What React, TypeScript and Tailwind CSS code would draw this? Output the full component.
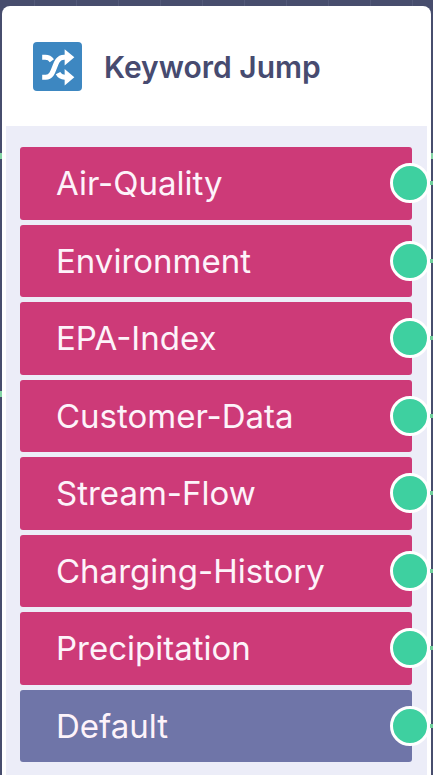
import React from "react";

type Branch = { label: string; fallback?: boolean };

const branches: Branch[] = [
  { label: "Air-Quality" },
  { label: "Environment" },
  { label: "EPA-Index" },
  { label: "Customer-Data" },
  { label: "Stream-Flow" },
  { label: "Charging-History" },
  { label: "Precipitation" },
  { label: "Default", fallback: true },
];

function ShuffleIcon() {
  return (
    <svg
      viewBox="0 0 48 48"
      className="size-[49px] shrink-0 rounded bg-[#3d87c1]"
      fill="none"
      aria-hidden="true"
    >
      <path
        d="M9 15h3c3 0 5 1.200 6.500 3.300M9 34.500h3.500c10.500 0 6.500-19.500 18-19.500h3M24.500 30.500c1.500 2.800 3.500 4 6.500 4h2.500"
        stroke="#fff"
        strokeWidth="5"
      />
      <path d="M31 7l9.500 8-9.500 8zM31 26.500l9.500 8-9.500 8z" fill="#fff" />
    </svg>
  );
}

function BranchRow({ label, fallback }: Branch) {
  return (
    <li
      className={`flex items-center justify-between rounded-[3px] pl-9 text-[#fdf3fa] ${
        fallback ? "bg-[#6f75a8]" : "bg-[#cd3a78]"
      }`}
    >
      <span className="text-[33px] leading-10">{label}</span>
      <span className="-mr-[21px] flex items-center">
        <span className="size-10 rounded-full border-3 border-white bg-[#3ed0a0]" />
        <span className="h-1 w-[3px] bg-[#6fcf9b]" />
      </span>
    </li>
  );
}

export default function App() {
  return (
    <main className="relative overflow-hidden bg-[#474d6d] bg-[repeating-linear-gradient(90deg,transparent_0_34px,#535979_34px_35px,transparent_35px_42px)] px-0.5 pt-1.5 font-['Inter','Liberation_Sans',sans-serif]">
      <div className="absolute inset-x-0 top-[153px] flex justify-between">
        <span className="h-1.5 w-0.5 bg-[#83d5a5]" />
        <span className="h-1.5 w-0.5 bg-[#83d5a5]" />
      </div>
      <div className="absolute left-0 top-[391px] h-1.5 w-0.5 bg-[#83d5a5]" />
      <section className="rounded-t-lg bg-white px-1">
        <header className="flex h-[120px] items-center gap-[22px] pl-[27px]">
          <ShuffleIcon />
          <h1 className="pt-0.5 text-[30px] font-semibold leading-10 text-[#474b70]">Keyword Jump</h1>
        </header>
        <div className="bg-[#ecedf8] pb-[13px] pl-3.5 pr-[15px] pt-[21px]">
          <ul className="grid min-h-[615px] gap-[5px]">
            {branches.map((b) => (
              <BranchRow key={b.label} {...b} />
            ))}
          </ul>
        </div>
      </section>
    </main>
  );
}
